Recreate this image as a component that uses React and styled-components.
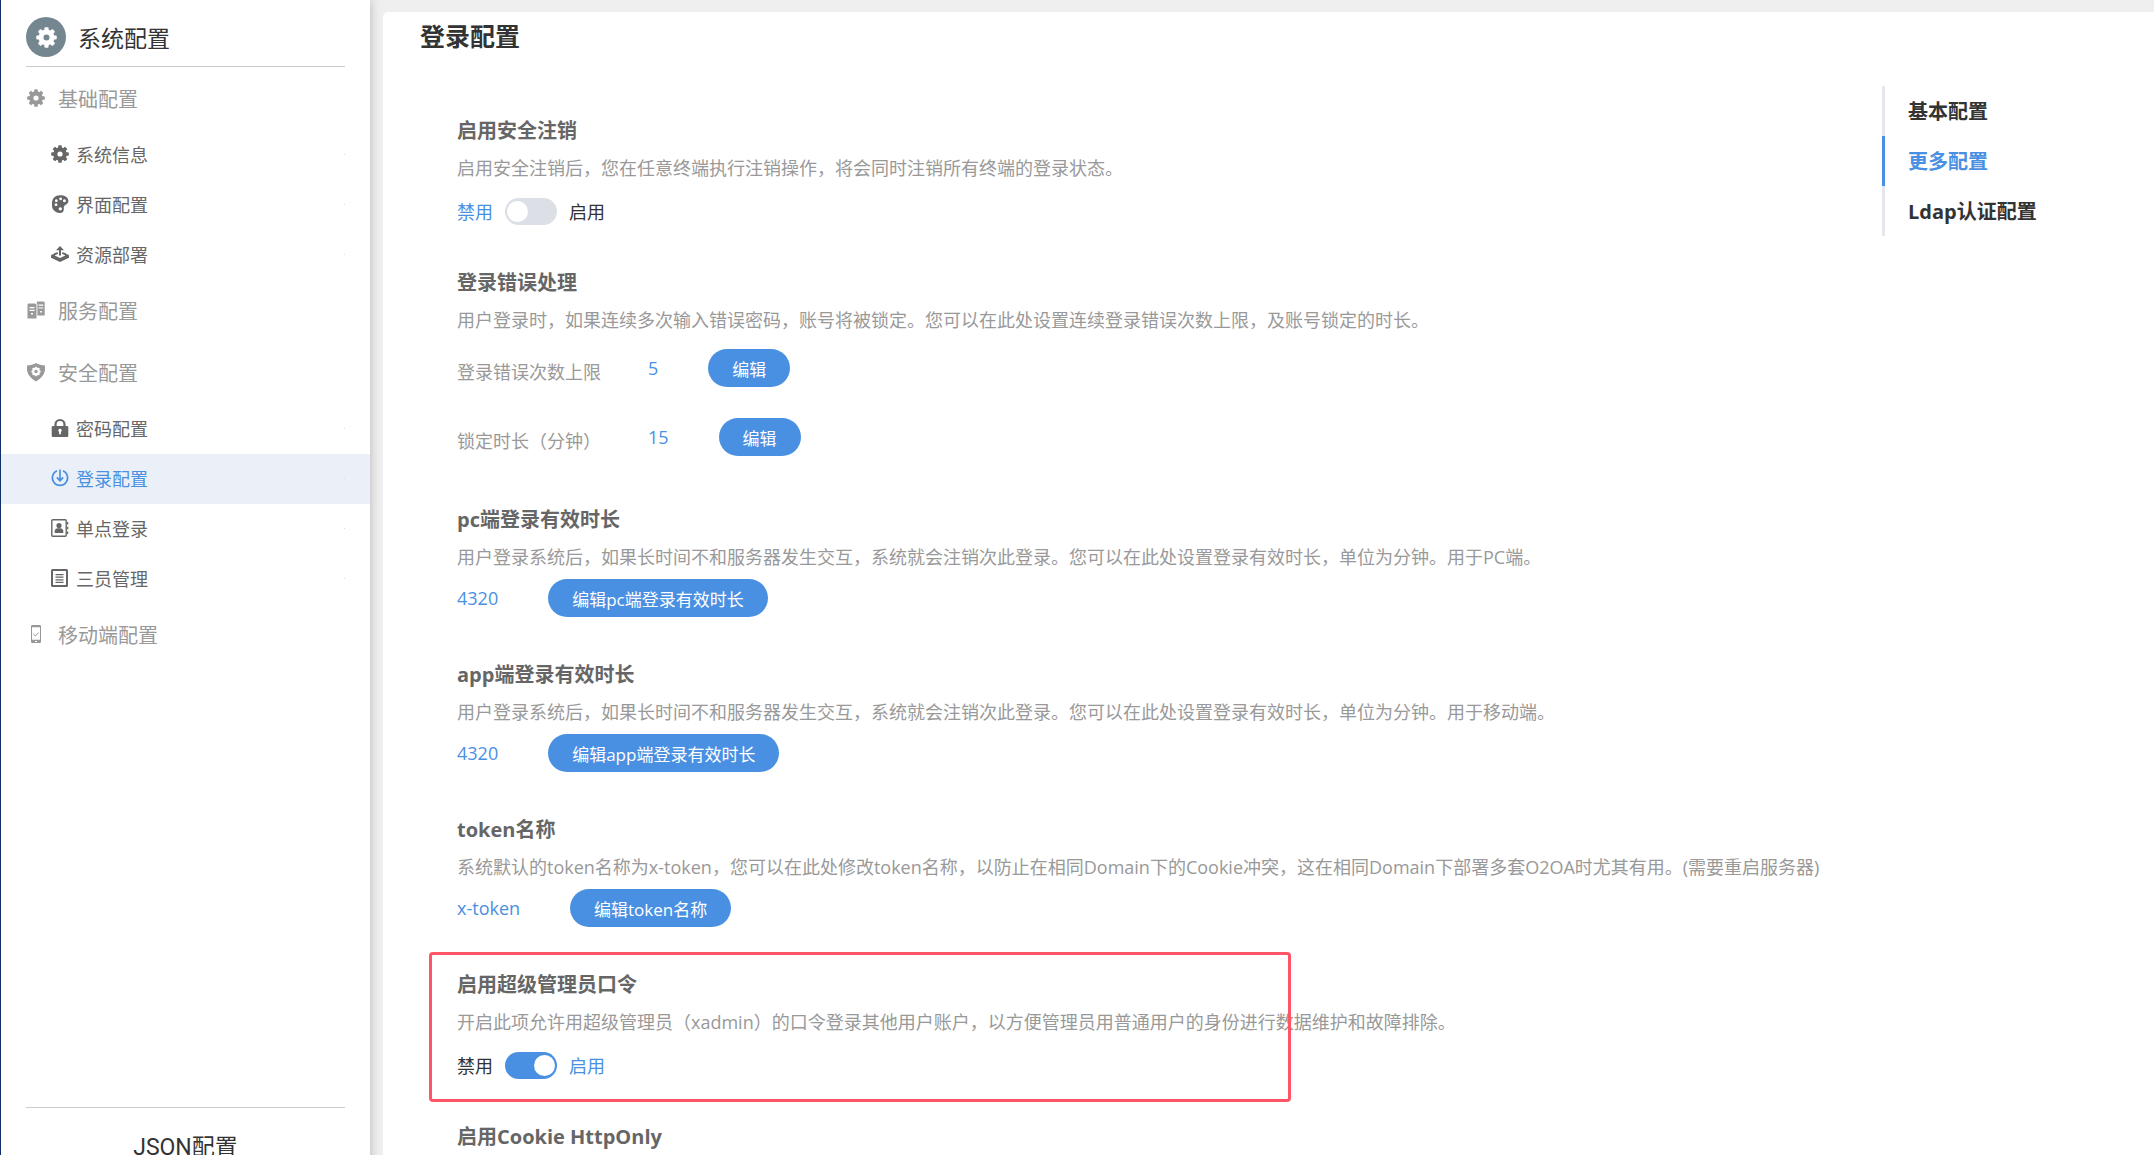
import React, { useState } from 'react';
import styled, { createGlobalStyle, css } from 'styled-components';

const GlobalStyle = createGlobalStyle`
    * {
        box-sizing: border-box;
    }

    body {
        margin: 0;
        overflow: hidden;
        background: #efefef;
        color: #333;
        font-family: 'Open Sans', 'Noto Sans CJK SC', sans-serif;
        font-size: 18px;
    }
`;

/* ---------- icons ---------- */

const teeth = [0, 45, 90, 135, 180, 225, 270, 315];

function GearIcon() {
    return (
        <Icon viewBox="0 0 18 18">
            <circle cx="9" cy="9" r="4.7" fill="none" stroke="currentColor" strokeWidth="4.2" />
            {teeth.map((deg) => (
                <rect
                    key={deg}
                    x="7.2"
                    y="0.2"
                    width="3.6"
                    height="3.6"
                    rx="0.9"
                    transform={`rotate(${deg} 9 9)`}
                />
            ))}
        </Icon>
    );
}

function PaletteIcon() {
    return (
        <Icon viewBox="0 0 18 18">
            <path
                fillRule="evenodd"
                d="M9 .2C4.2.2 1 3.4 1 8v2.6c0 4.2 3.4 7.1 7.4 7.4 2.9.2 4.6-1.4 4.4-4-.1-2 0-3 1.5-3.9 1.8-1.1 3.1-2 3.1-4C17.4 2.2 13.6.2 9 .2z
                M5.3 4.3a1.4 1.4 0 1 0 .01 0z
                M9.6 2.4a1.4 1.4 0 1 0 .01 0z
                M13.4 4.3a1.5 1.5 0 1 0 .01 0z
                M5 8.3a1.4 1.4 0 1 0 .01 0z
                M9.3 12.3a1.6 1.6 0 1 0 .01 0z"
            />
        </Icon>
    );
}

function DeployIcon() {
    return (
        <Icon viewBox="0 0 18 18">
            <path d="M9 1l4 4.2h-3v5.3H8V5.2H5z" />
            <path d="M0 10.2 5 7.6h2v1.1l-3.4 1.7L9 12.9l5.4-2.5L11 8.7V7.6h2l5 2.6v2.5l-9 4.2-9-4.2z" />
        </Icon>
    );
}

function ServerIcon() {
    return (
        <Icon viewBox="0 0 18 18">
            <path
                fillRule="evenodd"
                d="M1.5 2.6h6.7l1.3 1v13.9h-9V3.6zM2.5 6v1.2h5V6zM2.5 8.8V10h5V8.8zM4 12v1.5h2V12z"
            />
            <path
                fillRule="evenodd"
                d="M10 .6h6.7l1 1v13h-7.3V3.2L9.6 2zM11.6 3.6v1.2h4.7V3.6zM11.6 6.4v1.2h4.7V6.4zM13.2 10v1.5H15V10z"
            />
        </Icon>
    );
}

function ShieldIcon() {
    return (
        <Icon viewBox="0 0 18 18">
            <path d="M9 0c2.6 1.5 5.6 2.3 9 2.4V6c0 5.4-3.8 9.3-9 12.5C3.8 15.3 0 11.4 0 6V2.4C3.4 2.3 6.4 1.5 9 0z" />
            <circle cx="9" cy="8.5" r="2.8" fill="none" stroke="#fff" strokeWidth="2.2" />
            {teeth.map((deg) => (
                <rect
                    key={deg}
                    x="8.2"
                    y="3.8"
                    width="1.6"
                    height="1.6"
                    fill="#fff"
                    transform={`rotate(${deg} 9 8.5)`}
                />
            ))}
        </Icon>
    );
}

function LockIcon() {
    return (
        <Icon viewBox="0 0 18 18">
            <path d="M4.5 8V5.5a4.5 4.5 0 0 1 9 0V8" fill="none" stroke="currentColor" strokeWidth="2.2" />
            <path
                fillRule="evenodd"
                d="M2 7h14a1.3 1.3 0 0 1 1.3 1.3v8.4A1.3 1.3 0 0 1 16 18H2A1.3 1.3 0 0 1 .7 16.7V8.3A1.3 1.3 0 0 1 2 7zM9 9.7a1.8 1.8 0 0 0-.9 3.3v2.2h1.8V13A1.8 1.8 0 0 0 9 9.7z"
            />
        </Icon>
    );
}

function LoginIcon() {
    return (
        <Icon viewBox="0 0 18 18" fill="none" stroke="currentColor" strokeWidth="1.7">
            <path d="M6 1.8a7.6 7.6 0 1 0 6 0" />
            <path d="M9 .5v11M5.8 8.3 9 11.7l3.2-3.4" />
        </Icon>
    );
}

function ContactIcon() {
    return (
        <Icon viewBox="0 0 18 18">
            <rect x=".8" y=".8" width="14.4" height="16.4" rx="1" fill="none" stroke="currentColor" strokeWidth="1.4" />
            <path d="M16 3h1.3v2.5H16zM16 7.7h1.3v2.5H16zM16 12.4h1.3v2.5H16z" />
            <circle cx="8" cy="6.6" r="2.6" />
            <path d="M3.7 14v-2c0-1.7 1.5-2.8 3-2.8h2.6c1.5 0 3 1.1 3 2.8v2z" />
        </Icon>
    );
}

function ListIcon() {
    return (
        <Icon viewBox="0 0 18 18">
            <rect x="1" y="1" width="15" height="16" rx=".5" fill="none" stroke="currentColor" strokeWidth="2" />
            <path d="M4.5 5h8v1.2h-8zM4.5 7.6h8v1.2h-8zM4.5 10.2h8v1.2h-8zM4.5 12.8h8V14h-8z" />
        </Icon>
    );
}

function PhoneIcon() {
    return (
        <Icon viewBox="0 0 18 18">
            <path
                fillRule="evenodd"
                d="M5.2 0h7.6a1.2 1.2 0 0 1 1.2 1.2v15.6a1.2 1.2 0 0 1-1.2 1.2H5.2A1.2 1.2 0 0 1 4 16.8V1.2A1.2 1.2 0 0 1 5.2 0zM5 2.2v12.6h8V2.2zM8 16v1h2v-1z"
            />
            <path d="m6.5 9.3 1.8 1.7 3.2-3.4" fill="none" stroke="currentColor" />
        </Icon>
    );
}

/* ---------- data ---------- */

const menu = [
    {
        title: '基础配置',
        icon: <GearIcon />,
        items: [
            { title: '系统信息', icon: <GearIcon /> },
            { title: '界面配置', icon: <PaletteIcon /> },
            { title: '资源部署', icon: <DeployIcon /> },
        ],
    },
    { title: '服务配置', icon: <ServerIcon />, items: [] },
    {
        title: '安全配置',
        icon: <ShieldIcon />,
        items: [
            { title: '密码配置', icon: <LockIcon /> },
            { title: '登录配置', icon: <LoginIcon /> },
            { title: '单点登录', icon: <ContactIcon /> },
            { title: '三员管理', icon: <ListIcon /> },
        ],
    },
    { title: '移动端配置', icon: <PhoneIcon />, items: [] },
];

const anchors = ['基本配置', '更多配置', 'Ldap认证配置'];

/* ---------- parts ---------- */

function SwitchField({ name, defaultOn }) {
    const [on, setOn] = useState(defaultOn);

    return (
        <SwitchRow>
            <SwitchText $active={!on}>禁用</SwitchText>
            <Switch
                type="checkbox"
                role="switch"
                aria-label={name}
                checked={on}
                onChange={(e) => setOn(e.target.checked)}
            />
            <SwitchText $active={on}>启用</SwitchText>
        </SwitchRow>
    );
}

function Section({ title, desc, marked, children }) {
    return (
        <SectionBox $marked={marked}>
            <SectionTitle>{title}</SectionTitle>
            {desc && <Desc>{desc}</Desc>}
            {children}
        </SectionBox>
    );
}

function ValueField({ value, action }) {
    return (
        <ValueRow>
            <Value>{value}</Value>
            <EditButton type="button">{action}</EditButton>
        </ValueRow>
    );
}

function App() {
    const [current, setCurrent] = useState('登录配置');
    const [anchor, setAnchor] = useState('更多配置');

    return (
        <>
            <GlobalStyle />
            <Page>
                <Sidebar>
                    <SideHeader>
                        <Logo>
                            <GearIcon />
                        </Logo>
                        系统配置
                    </SideHeader>
                    <Menu>
                        {menu.map((group) => (
                            <React.Fragment key={group.title}>
                                <Group>
                                    {group.icon}
                                    {group.title}
                                </Group>
                                {group.items.map((item) => (
                                    <Item
                                        key={item.title}
                                        href="#"
                                        $active={item.title === current}
                                        onClick={() => setCurrent(item.title)}
                                    >
                                        {item.icon}
                                        {item.title}
                                    </Item>
                                ))}
                            </React.Fragment>
                        ))}
                    </Menu>
                    <JsonButton type="button">JSON配置</JsonButton>
                </Sidebar>

                <Panel>
                    <Title>登录配置</Title>
                    <Body>
                        <Sections>
                            <Section
                                title="启用安全注销"
                                desc="启用安全注销后，您在任意终端执行注销操作，将会同时注销所有终端的登录状态。"
                            >
                                <SwitchField name="启用安全注销" defaultOn={false} />
                            </Section>

                            <Section
                                title="登录错误处理"
                                desc="用户登录时，如果连续多次输入错误密码，账号将被锁定。您可以在此处设置连续登录错误次数上限，及账号锁定的时长。"
                            >
                                <LimitRows>
                                    <LimitRow>
                                        <LimitLabel>登录错误次数上限</LimitLabel>
                                        <Value>5</Value>
                                        <EditButton type="button">编辑</EditButton>
                                    </LimitRow>
                                    <LimitRow>
                                        <LimitLabel>锁定时长（分钟）</LimitLabel>
                                        <Value>15</Value>
                                        <EditButton type="button">编辑</EditButton>
                                    </LimitRow>
                                </LimitRows>
                            </Section>

                            <Section
                                title="pc端登录有效时长"
                                desc="用户登录系统后，如果长时间不和服务器发生交互，系统就会注销次此登录。您可以在此处设置登录有效时长，单位为分钟。用于PC端。"
                            >
                                <ValueField value="4320" action="编辑pc端登录有效时长" />
                            </Section>

                            <Section
                                title="app端登录有效时长"
                                desc="用户登录系统后，如果长时间不和服务器发生交互，系统就会注销次此登录。您可以在此处设置登录有效时长，单位为分钟。用于移动端。"
                            >
                                <ValueField value="4320" action="编辑app端登录有效时长" />
                            </Section>

                            <Section
                                title="token名称"
                                desc="系统默认的token名称为x-token，您可以在此处修改token名称，以防止在相同Domain下的Cookie冲突，这在相同Domain下部署多套O2OA时尤其有用。(需要重启服务器)"
                            >
                                <ValueField value="x-token" action="编辑token名称" />
                            </Section>

                            <Section
                                marked
                                title="启用超级管理员口令"
                                desc="开启此项允许用超级管理员（xadmin）的口令登录其他用户账户，以方便管理员用普通用户的身份进行数据维护和故障排除。"
                            >
                                <SwitchField name="启用超级管理员口令" defaultOn />
                            </Section>

                            <Section title="启用Cookie HttpOnly" />
                        </Sections>

                        <AnchorNav>
                            {anchors.map((name) => (
                                <Anchor
                                    key={name}
                                    href="#"
                                    $active={name === anchor}
                                    onClick={() => setAnchor(name)}
                                >
                                    {name}
                                </Anchor>
                            ))}
                        </AnchorNav>
                    </Body>
                </Panel>
            </Page>
        </>
    );
}

/* ---------- styles ---------- */

const Icon = styled.svg.attrs((props) => ({ fill: props.fill || 'currentColor', 'aria-hidden': true }))`
    flex: none;
    width: 18px;
    height: 18px;
    overflow: visible;
`;

const Page = styled.div`
    display: flex;
    height: 100vh;
    overflow: hidden;
    border-left: 1px solid #0b2f66;
`;

/* The sidebar runs a little past the window, so its last button is cut */
const Sidebar = styled.aside`
    position: relative;
    z-index: 1;
    display: flex;
    flex-direction: column;
    flex: none;
    width: 369px;
    height: calc(100vh + 26px);
    background: #fff;
    box-shadow: 0 0 10px rgba(0, 0, 0, 0.25);
`;

const SideHeader = styled.div`
    display: flex;
    align-items: center;
    gap: 12px;
    height: 67px;
    margin: 0 25px;
    padding-top: 8px;
    border-bottom: 1px solid #ccc;
    font-size: 23px;
`;

const Logo = styled.span`
    display: flex;
    align-items: center;
    justify-content: center;
    width: 40px;
    height: 40px;
    border-radius: 50%;
    background: #748791;
    color: #fff;

    svg {
        width: 21px;
        height: 21px;
    }
`;

const Menu = styled.nav`
    flex: 1;
    padding-top: 1px;
`;

const Group = styled.div`
    display: flex;
    align-items: center;
    gap: 13px;
    height: 62px;
    padding: 0 0 2px 26px;
    color: #999;
    font-size: 20px;
`;

const Item = styled.a`
    display: flex;
    align-items: center;
    gap: 7px;
    height: 50px;
    padding: 0 25px 2px 50px;
    color: #666;
    text-decoration: none;

    ${(props) => props.$active && css`
        background: #ebf0f8;
        color: #4a90e2;
    `}

    &::after {
        content: '';
        width: 1px;
        height: 1px;
        margin-left: auto;
        background: #ddd;
    }
`;

/* Roboto keeps its J on the baseline, so the cut does not turn it into an I */
const JsonButton = styled.button`
    height: 74px;
    margin: 0 25px;
    padding: 0;
    border: 0;
    border-top: 1px solid #ccc;
    background: none;
    color: #333;
    font-family: Roboto, 'Noto Sans CJK SC', sans-serif;
    font-size: 23px;
`;

const Panel = styled.main`
    flex: 1;
    min-width: 0;
    margin: 12px 0 0 13px;
    border-radius: 5px 0 0 0;
    background: #fff;
`;

const Title = styled.h1`
    margin: 0;
    padding-left: 37px;
    font-size: 25px;
    font-weight: 700;
    line-height: 48px;
`;

const Body = styled.div`
    display: flex;
    align-items: flex-start;
    padding-top: 26px;
`;

const Sections = styled.div`
    flex: 1;
    min-width: 0;
    padding: 25px 0 0 74px;
`;

const SectionBox = styled.section`
    position: relative;
    padding-bottom: 38px;

    ${(props) => props.$marked && css`
        &::after {
            content: '';
            position: absolute;
            top: -13px;
            bottom: 15px;
            left: -28px;
            box-sizing: border-box;
            width: 862px;
            border: 3px solid #ff5566;
            border-radius: 4px;
            pointer-events: none;
        }
    `}
`;

const SectionTitle = styled.h2`
    margin: 0;
    color: #666;
    font-size: 20px;
    font-weight: 700;
    line-height: 40px;
`;

const Desc = styled.p`
    margin: 0;
    color: #999;
    line-height: 34px;
    white-space: nowrap;
`;

const SwitchRow = styled.div`
    display: flex;
    align-items: center;
    gap: 12px;
    height: 40px;
    padding-top: 13px;
`;

const SwitchText = styled.span`
    padding-bottom: 2px;
    color: ${(props) => (props.$active ? '#4a90e2' : '#333')};
`;

const Switch = styled.input`
    display: flex;
    align-items: center;
    appearance: none;
    width: 52px;
    height: 27px;
    margin: 0;
    padding: 0 2px;
    border-radius: 14px;
    background: #dcdfe6;
    cursor: pointer;

    &::before {
        content: '';
        width: 21px;
        height: 21px;
        border-radius: 50%;
        background: #fff;
    }

    &:checked {
        justify-content: flex-end;
        background: #4a90e2;
    }
`;

const ValueRow = styled.div`
    display: flex;
    align-items: center;
    gap: 50px;
    padding-top: 5px;
`;

const Value = styled.span`
    color: #4a90e2;
`;

const EditButton = styled.button`
    height: 38px;
    padding: 0 24px;
    border: 0;
    border-radius: 19px;
    background: #4a90e2;
    color: #fff;
    font: inherit;
    font-size: 17px;
    cursor: pointer;
`;

const LimitRows = styled.div`
    display: flex;
    flex-direction: column;
    gap: 19px;
    padding-top: 6px;
`;

const LimitRow = styled.div`
    display: flex;
    align-items: center;
    gap: 50px;
    height: 50px;
`;

const LimitLabel = styled.span`
    width: 141px;
    padding-top: 6px;
    color: #999;
    white-space: nowrap;
`;

const AnchorNav = styled.nav`
    flex: none;
    width: 272px;
`;

const Anchor = styled.a`
    display: block;
    padding: 2px 0 0 23px;
    border-left: 3px solid ${(props) => (props.$active ? '#4a90e2' : '#e4e7ed')};
    color: ${(props) => (props.$active ? '#4a90e2' : '#333')};
    font-size: 20px;
    font-weight: 700;
    line-height: 48px;
    text-decoration: none;
`;

export default App;
